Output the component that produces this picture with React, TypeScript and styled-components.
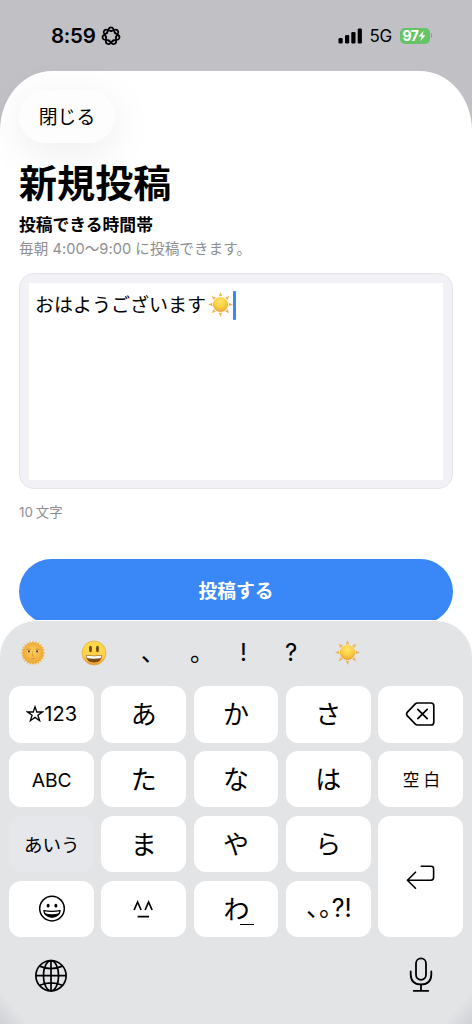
import React from 'react';
import styled, { createGlobalStyle } from 'styled-components';

const GlobalStyle = createGlobalStyle`
  * { box-sizing: border-box; }
  body {
    margin: 0;
    background: #c1c0c5;
    color: #000;
    font-family: Inter, 'Noto Sans CJK JP', sans-serif;
    overflow: hidden;
  }
  button { font: inherit; color: inherit; border: 0; padding: 0; margin: 0; }
  svg { display: block; flex: none; }
`;

const Screen = styled.div`
  width: 472px;
  height: 1024px;
  display: flex;
  flex-direction: column;
  overflow: hidden;
  background: #c1c0c5;
`;

const StatusBar = styled.header`
  flex: none;
  height: 71px;
  display: flex;
  align-items: center;
  justify-content: space-between;
  padding: 0 40px 0 51px;
`;

const StatusGroup = styled.div<{ $gap: number }>`
  display: flex;
  align-items: center;
  gap: ${({ $gap }) => $gap}px;
`;

const Clock = styled.span`
  font-size: 20.5px;
  font-weight: 600;
  line-height: 24px;
  width: 45px;
  letter-spacing: -0.3px;
  white-space: nowrap;
`;

const Network = styled.span`
  font-size: 17px;
  line-height: 24px;
  width: 23px;
  letter-spacing: -0.4px;
`;

const Battery = styled.div`
  display: flex;
  align-items: center;
  gap: 1px;
`;

const BatteryLevel = styled.span`
  display: flex;
  align-items: center;
  justify-content: center;
  width: 30px;
  height: 16px;
  border-radius: 5px;
  background: #65c466;
  color: #fff;
  font-size: 14px;
  font-weight: 700;
  letter-spacing: -0.5px;
`;

const BatteryCap = styled.span`
  width: 1.5px;
  height: 5px;
  border-radius: 0 2px 2px 0;
  background: #98979c;
`;

const Sheet = styled.main`
  flex: none;
  width: 472px;
  height: 550px;
  display: flex;
  flex-direction: column;
  align-items: flex-start;
  padding: 19px 19px 0;
  border-radius: 52px 52px 0 0 / 60px 60px 0 0;
  background: #fff;
`;

const CloseButton = styled.button`
  flex: none;
  width: 96px;
  height: 53px;
  border-radius: 27px;
  background: #fdfdfd;
  box-shadow: 0 8px 44px rgba(0, 0, 0, 0.08);
  font-size: 18.8px;
  line-height: 53px;
`;

const Title = styled.h1`
  flex: none;
  margin: 13px 0 0;
  height: 57px;
  font-size: 38px;
  line-height: 54px;
  font-weight: 700;
  letter-spacing: 0.1px;
`;

const Subtitle = styled.h2`
  flex: none;
  margin: 0;
  height: 24px;
  font-size: 16.8px;
  line-height: 24px;
  font-weight: 700;
`;

const Hint = styled.p`
  flex: none;
  margin: 0;
  height: 24px;
  font-size: 14.6px;
  line-height: 25px;
  letter-spacing: 0.05px;
  color: #8e8e92;
  white-space: nowrap;
`;

const Editor = styled.div`
  flex: none;
  width: 434px;
  height: 216px;
  margin-top: 12px;
  padding: 9px;
  border: 1px solid #e5e5e8;
  border-radius: 15px;
  background: #f1f1f6;
`;

const EditorField = styled.div`
  height: 197px;
  padding: 7px 6px;
  display: flex;
  align-items: flex-start;
  background: #fff;
  font-size: 19px;
`;

const EditorText = styled.span`
  width: 173px;
  line-height: 32px;
  white-space: nowrap;
`;

const Caret = styled.span`
  width: 2.5px;
  height: 29px;
  margin-top: 1px;
  border-radius: 1px;
  background: #3a87f7;
`;

const Counter = styled.p`
  flex: none;
  margin: 13px 0 0;
  height: 20px;
  font-size: 13.4px;
  line-height: 20px;
  word-spacing: -0.8px;
  color: #8e8e92;
`;

const SubmitButton = styled.button`
  flex: none;
  width: 434px;
  height: 65px;
  margin-top: 37px;
  border-radius: 33px;
  background: #3a87f7;
  color: #fff;
  font-size: 18.8px;
  font-weight: 700;
  line-height: 66px;
`;

const Keyboard = styled.section`
  flex: none;
  width: 472px;
  height: 403px;
  border-top: 1px solid #dfe3ea;
  border-radius: 36px 36px 0 0;
  background:
    linear-gradient(50deg, #cfd1d5 0, transparent 22px),
    linear-gradient(-50deg, #cfd1d5 0, transparent 22px),
    #e2e4e6;
  box-shadow: 0 0 0 30px #fff;
  clip-path: inset(-1px 0 0 0);
`;

const Suggestions = styled.div`
  height: 64px;
  display: flex;
  align-items: center;
  padding: 0 0 3px 20px;
`;

const Suggestion = styled.span<{ $width: number }>`
  width: ${({ $width }) => $width}px;
  flex: none;
  font-size: 24px;
  line-height: 34px;
  height: 34px;
`;

const EmojiSlot = styled(Suggestion)`
  display: flex;
  align-items: center;
`;

const Keys = styled.div`
  display: grid;
  grid-template-columns: repeat(5, 84.7px);
  grid-template-rows: repeat(4, 56.6px);
  gap: 8.3px 7.5px;
  padding-left: 9.3px;
`;

const Key = styled.button<{ $size?: number; $active?: boolean; $tall?: boolean; $spacing?: number }>`
  display: flex;
  align-items: center;
  justify-content: center;
  grid-row: ${({ $tall }) => ($tall ? 'span 2' : 'auto')};
  border-radius: 12px;
  background: ${({ $active }) => ($active ? '#e6e7eb' : '#fff')};
  font-size: ${({ $size = 26 }) => $size}px;
  letter-spacing: ${({ $spacing = 0 }) => $spacing}px;
  line-height: 1;
  white-space: nowrap;
`;

const Label = styled.span<{ $y?: number; $x?: number }>`
  transform: translate(${({ $x = 0 }) => $x}px, ${({ $y = 0 }) => $y}px);
`;

const KanaUnderline = styled.span`
  width: 14px;
  height: 1.5px;
  margin: 31px -5px 0 -10px;
  background: #000;
`;

const BottomBar = styled.div`
  display: flex;
  justify-content: space-between;
  align-items: center;
  height: 36px;
  margin-top: 20px;
  padding: 0 39px 0 35px;
`;

const Sun = ({ size = 25 }: { size?: number }) => (
  <svg width={size} height={size} viewBox="0 0 26 26">
    <defs>
      <radialGradient id="sunDisc" cx=".5" cy=".3" r=".7">
        <stop offset="0" stopColor="#ffe66b" />
        <stop offset=".55" stopColor="#f8cf42" />
        <stop offset="1" stopColor="#eba136" />
      </radialGradient>
    </defs>
    {[0, 45, 90, 135, 180, 225, 270, 315].map((a) => (
      <path key={a} d="M13 0 14.8 4.7Q13 3.7 11.2 4.7Z" fill="#efb052" transform={`rotate(${a} 13 13)`} />
    ))}
    <circle cx="13" cy="13" r="7.9" fill="url(#sunDisc)" />
  </svg>
);

const SunFace = () => (
  <svg width="26" height="26" viewBox="0 0 26 26">
    <defs>
      <radialGradient id="sunFace" cx=".5" cy=".45" r=".55">
        <stop offset="0" stopColor="#fbcd5c" />
        <stop offset="1" stopColor="#eda637" />
      </radialGradient>
    </defs>
    {Array.from({ length: 24 }, (_, i) => (
      <path key={i} d="M13 .4 14.4 4H11.6Z" fill="#f0b23c" transform={`rotate(${i * 15} 13 13)`} />
    ))}
    <circle cx="13" cy="13" r="10.5" fill="url(#sunFace)" />
    <path d="M6.5 9.6Q8.5 8.2 10.6 9.6M15.4 9.6Q17.5 8.2 19.5 9.6" stroke="#c98325" strokeWidth=".8" fill="none" />
    <ellipse cx="8.8" cy="11.3" rx="1.6" ry="1" fill="#fff0bd" />
    <ellipse cx="17.2" cy="11.3" rx="1.6" ry="1" fill="#fff0bd" />
    <circle cx="8.9" cy="11.3" r="1.1" fill="#4c3b2a" />
    <circle cx="17.1" cy="11.3" r="1.1" fill="#4c3b2a" />
    <path d="M12.4 11v4.3q-.8.9.6 1 1.3-.1.7-1" stroke="#d08a2a" strokeWidth=".6" fill="none" />
    <path d="M10.7 18.5Q13 17.9 15.3 18.5 13 19.9 10.7 18.5Z" fill="#d58434" />
  </svg>
);

const Smile = () => (
  <svg width="26" height="26" viewBox="0 0 26 26">
    <defs>
      <linearGradient id="smileFace" x1="0" y1="0" x2="0" y2="1">
        <stop offset="0" stopColor="#fdda48" />
        <stop offset=".6" stopColor="#fdd349" />
        <stop offset="1" stopColor="#e99a33" />
      </linearGradient>
    </defs>
    <circle cx="13" cy="13" r="12" fill="url(#smileFace)" stroke="#e5a137" strokeWidth=".6" />
    <ellipse cx="9.5" cy="9" rx="1.4" ry="3.2" fill="#6a4415" />
    <ellipse cx="16.5" cy="9" rx="1.4" ry="3.2" fill="#6a4415" />
    <path d="M4.8 15Q13 16.4 21.2 15 20.5 22.6 13 22.6T4.8 15Z" fill="#7b4a17" />
    <path d="M5.3 15.5Q13 17 20.7 15.5 20.5 18.1 19.2 18.3 13 19.2 6.8 18.3 5.5 18.1 5.3 15.5Z" fill="#fff" />
  </svg>
);

const FocusIcon = () => (
  <svg width="20" height="20" viewBox="0 0 20 20" fill="none" stroke="#000" strokeWidth="1.75">
    {Array.from({ length: 7 }, (_, i) => (
      <path key={i} d="M5.6 7.6C6.6 5.8 7 4.9 7.4 3.6 8.2 .6 11.8 .6 12.6 3.6 13 4.9 13.4 5.8 14.4 7.6" transform={`rotate(${(i * 360) / 7} 10 10)`} />
    ))}
  </svg>
);

const Signal = () => (
  <svg width="25" height="16" viewBox="0 0 25 16">
    <rect x="0.5" y="10" width="4.2" height="5.6" rx="1.3" />
    <rect x="7" y="7" width="4.2" height="8.6" rx="1.3" />
    <rect x="13.3" y="4" width="4.2" height="11.6" rx="1.3" />
    <rect x="19.7" y=".5" width="4.2" height="15.1" rx="1.3" />
  </svg>
);

const Bolt = () => (
  <svg width="8" height="12" viewBox="0 0 8 12">
    <path d="M5.8.8.6 6.6h3.1L2.2 11.2 7.5 5.2H4.4Z" fill="#fff" />
  </svg>
);

const Star = () => (
  <svg width="18" height="18" viewBox="0 0 18 18" fill="none" stroke="#000" strokeWidth="1.3" strokeLinejoin="miter">
    <path d="M9 1.8 10.8 7H16.4L11.9 10.3 13.6 15.7 9 12.4 4.4 15.7 6.1 10.3 1.6 7H7.2Z" />
  </svg>
);

const Backspace = () => (
  <svg width="30" height="26" viewBox="0 0 30 26" fill="none" stroke="#000" strokeWidth="1.7" strokeLinecap="round" strokeLinejoin="round">
    <path d="M12.5 2H26Q28.8 2 28.8 4.8V21.2Q28.8 24 26 24H12.5Q11.2 24 10.3 23.1L2.4 14.9Q.8 13 2.4 11.1L10.3 2.9Q11.2 2 12.5 2Z" />
    <path d="m12.8 8.3 9.4 9.4m0-9.4-9.4 9.4" />
  </svg>
);

const ReturnIcon = () => (
  <svg width="30" height="26" viewBox="0 0 30 26" fill="none" stroke="#000" strokeWidth="1.6" strokeLinecap="round" strokeLinejoin="round">
    <path d="M16.3 2.2H26Q28.6 2.2 28.6 4.8V13.6Q28.6 16.2 26 16.2H2.4M10.5 8.2 2.4 16.2l8.1 8" />
  </svg>
);

const Grin = () => (
  <svg width="28" height="28" viewBox="0 0 28 28" fill="none" stroke="#000" strokeWidth="1.5">
    <circle cx="14" cy="13.6" r="12.3" />
    <ellipse cx="10.1" cy="10.7" rx="1.5" ry="1.9" fill="#000" stroke="none" />
    <ellipse cx="17.9" cy="10.7" rx="1.5" ry="1.9" fill="#000" stroke="none" />
    <path d="M5.8 15.6Q14 17.2 22.2 15.6C21.4 24.4 6.6 24.4 5.8 15.6Z" strokeWidth="1.2" strokeLinejoin="round" />
    <path d="M6.6 18.3Q14 20.2 21.4 18.3C18.9 23.8 9.1 23.8 6.6 18.3Z" fill="#000" stroke="none" />
  </svg>
);

const Globe = () => (
  <svg width="32" height="34" viewBox="0 0 32 34" fill="none" stroke="#000" strokeWidth="1.7">
    <circle cx="16" cy="17.7" r="15.1" />
    <ellipse cx="16" cy="17.7" rx="7.6" ry="15.1" />
    <path d="M16 2.7V32.7M1 17.7H31M4.7 8.1Q16 13 27.3 8.1M4.7 27.3Q16 22.4 27.3 27.3" />
  </svg>
);

const Mic = () => (
  <svg width="24" height="36" viewBox="0 0 24 36" fill="none" stroke="#000" strokeWidth="1.8" strokeLinecap="round">
    <rect x="7" y="1.4" width="10" height="21.4" rx="5" />
    <path d="M1.7 14.4V17.2Q1.7 27.4 12 27.4T22.3 17.2V14.4M12 27.4V33.8M4.7 33.8H19.3" />
  </svg>
);

const Kaomoji = () => (
  <svg width="22" height="22" viewBox="0 0 22 22" fill="none" stroke="#000" strokeWidth="1.7">
    <path d="M1.1 12 4.6 4l3.5 8M12.1 12 15.6 4l3.5 8M4.6 18.6H16" />
  </svg>
);

const kana = (text: string) => (
  <Key>
    <Label $y={1}>{text}</Label>
  </Key>
);

export default function App() {
  return (
    <>
      <GlobalStyle />
      <Screen>
        <StatusBar>
          <StatusGroup $gap={5}>
            <Clock>8:59</Clock>
            <FocusIcon />
          </StatusGroup>
          <StatusGroup $gap={7}>
            <Signal />
            <Network>5G</Network>
            <Battery>
              <BatteryLevel>97<Bolt /></BatteryLevel>
              <BatteryCap />
            </Battery>
          </StatusGroup>
        </StatusBar>

        <Sheet>
          <CloseButton><Label as="div" $y={1}>閉じる</Label></CloseButton>
          <Title>新規投稿</Title>
          <Subtitle>投稿できる時間帯</Subtitle>
          <Hint>毎朝 4:00〜9:00 に投稿できます。</Hint>
          <Editor>
            <EditorField>
              <EditorText>おはようございます</EditorText>
              <Label $y={2}><Sun size={25} /></Label>
              <Caret />
            </EditorField>
          </Editor>
          <Counter>10 文字</Counter>
          <SubmitButton>投稿する</SubmitButton>
        </Sheet>

        <Keyboard>
          <Suggestions>
            <EmojiSlot $width={61}><SunFace /></EmojiSlot>
            <EmojiSlot $width={60}><Smile /></EmojiSlot>
            <Suggestion $width={49}>、</Suggestion>
            <Suggestion $width={50}>。</Suggestion>
            <Suggestion $width={45}>!</Suggestion>
            <Suggestion $width={50}>?</Suggestion>
            <EmojiSlot $width={26}><Sun size={25} /></EmojiSlot>
          </Suggestions>
          <Keys>
            <Key $size={20}><Star /><Label>123</Label></Key>
            {kana('あ')}
            {kana('か')}
            {kana('さ')}
            <Key><Backspace /></Key>
            <Key $size={19.3}><Label $y={1}>ABC</Label></Key>
            {kana('た')}
            {kana('な')}
            {kana('は')}
            <Key $size={16.6} $spacing={4}><Label $x={3} $y={1}>空白</Label></Key>
            <Key $size={18.5} $active><Label $y={1}>あいう</Label></Key>
            {kana('ま')}
            {kana('や')}
            {kana('ら')}
            <Key $tall><ReturnIcon /></Key>
            <Key><Grin /></Key>
            <Key><Kaomoji /></Key>
            <Key><Label $y={1}>わ</Label><KanaUnderline /></Key>
            <Key $size={25}><Label $x={1} $y={-1}>､｡</Label><Label $x={1}>?!</Label></Key>
          </Keys>
          <BottomBar>
            <Globe />
            <Mic />
          </BottomBar>
        </Keyboard>
      </Screen>
    </>
  );
}
